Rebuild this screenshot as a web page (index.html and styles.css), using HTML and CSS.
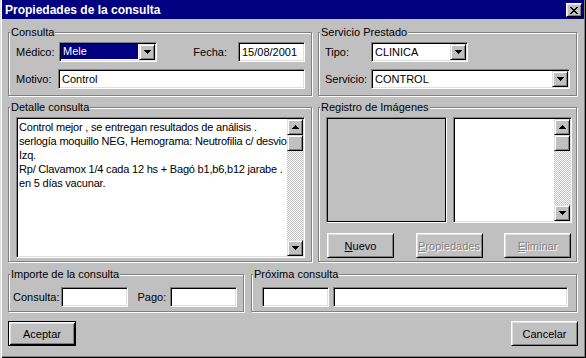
FILE: index.html
```html
<!DOCTYPE html>
<html lang="es">
  <head>
    <meta charset="UTF-8" />
    <title>Propiedades de la consulta</title>
    <link rel="stylesheet" href="styles.css">
  </head>
  <body>
    <div class="window">
      <div class="titlebar">
        <span class="title">Propiedades de la consulta</span>
        <span class="close-btn">
          <svg width="8" height="7" viewBox="0 0 8 7" shape-rendering="crispEdges">
            <path d="M0 0h2v1H0zM6 0h2v1H6zM1 1h2v1H1zM5 1h2v1H5zM2 2h4v1H2zM3 3h2v1H3zM2 4h4v1H2zM1 5h2v1H1zM5 5h2v1H5zM0 6h2v1H0zM6 6h2v1H6z" fill="#000"/>
          </svg>
        </span>
      </div>

      <div class="content">
        <div class="row row-top">
          <fieldset class="group group-consulta">
            <legend>Consulta</legend>
            <div class="group-body">
              <div class="line">
                <span class="lbl lbl-medico">Médico:</span>
                <div class="combo sunken combo-medico">
                  <span class="combo-value selected">Mele</span>
                  <span class="drop-btn raised">
                    <svg width="7" height="4" viewBox="0 0 7 4" shape-rendering="crispEdges"><path d="M0 0h7v1H0zM1 1h5v1H1zM2 2h3v1H2zM3 3h1v1H3z" fill="#000"/></svg>
                  </span>
                </div>
                <span class="lbl lbl-fecha">Fecha:</span>
                <div class="field sunken field-fecha"><span>15/08/2001</span></div>
              </div>
              <div class="line">
                <span class="lbl lbl-motivo">Motivo:</span>
                <div class="field sunken field-grow"><span>Control</span></div>
              </div>
            </div>
          </fieldset>

          <fieldset class="group group-servicio">
            <legend>Servicio Prestado</legend>
            <div class="group-body">
              <div class="line">
                <span class="lbl lbl-servicio">Tipo:</span>
                <div class="combo sunken combo-tipo">
                  <span class="combo-value">CLINICA</span>
                  <span class="drop-btn raised">
                    <svg width="7" height="4" viewBox="0 0 7 4" shape-rendering="crispEdges"><path d="M0 0h7v1H0zM1 1h5v1H1zM2 2h3v1H2zM3 3h1v1H3z" fill="#000"/></svg>
                  </span>
                </div>
              </div>
              <div class="line">
                <span class="lbl lbl-servicio">Servicio:</span>
                <div class="combo sunken field-grow">
                  <span class="combo-value">CONTROL</span>
                  <span class="drop-btn raised">
                    <svg width="7" height="4" viewBox="0 0 7 4" shape-rendering="crispEdges"><path d="M0 0h7v1H0zM1 1h5v1H1zM2 2h3v1H2zM3 3h1v1H3z" fill="#000"/></svg>
                  </span>
                </div>
              </div>
            </div>
          </fieldset>
        </div>

        <div class="row row-mid">
          <fieldset class="group group-detalle">
            <legend>Detalle consulta</legend>
            <div class="group-body">
              <div class="memo sunken">
                <div class="memo-text">Control mejor , se entregan resultados de análisis .<br>serlogía moquillo NEG, Hemograma: Neutrofilia c/ desvio<br>Izq.<br>Rp/ Clavamox 1/4 cada 12 hs + Bagó b1,b6,b12 jarabe .<br>en 5 días vacunar.</div>
                <div class="scrollbar">
                  <span class="scroll-btn raised">
                    <svg width="7" height="4" viewBox="0 0 7 4" shape-rendering="crispEdges"><path d="M3 0h1v1H3zM2 1h3v1H2zM1 2h5v1H1zM0 3h7v1H0z" fill="#000"/></svg>
                  </span>
                  <span class="scroll-thumb raised"></span>
                  <span class="scroll-track"></span>
                  <span class="scroll-btn raised">
                    <svg width="7" height="4" viewBox="0 0 7 4" shape-rendering="crispEdges"><path d="M0 0h7v1H0zM1 1h5v1H1zM2 2h3v1H2zM3 3h1v1H3z" fill="#000"/></svg>
                  </span>
                </div>
              </div>
            </div>
          </fieldset>

          <fieldset class="group group-registro">
            <legend>Registro de Imágenes</legend>
            <div class="group-body registro-body">
              <div class="image-box"></div>
              <div class="list-box sunken">
                <div class="list-items"></div>
                <div class="scrollbar">
                  <span class="scroll-btn raised">
                    <svg width="7" height="4" viewBox="0 0 7 4" shape-rendering="crispEdges"><path d="M3 0h1v1H3zM2 1h3v1H2zM1 2h5v1H1zM0 3h7v1H0z" fill="#000"/></svg>
                  </span>
                  <span class="scroll-thumb raised"></span>
                  <span class="scroll-track"></span>
                  <span class="scroll-btn raised">
                    <svg width="7" height="4" viewBox="0 0 7 4" shape-rendering="crispEdges"><path d="M0 0h7v1H0zM1 1h5v1H1zM2 2h3v1H2zM3 3h1v1H3z" fill="#000"/></svg>
                  </span>
                </div>
              </div>
              <div class="image-actions">
                <span class="btn"><u>N</u>uevo</span>
                <span class="btn disabled"><u>P</u>ropiedades</span>
                <span class="btn disabled"><u>E</u>liminar</span>
              </div>
            </div>
          </fieldset>
        </div>

        <div class="row row-bottom">
          <fieldset class="group group-importe">
            <legend>Importe de la consulta</legend>
            <div class="group-body line">
              <span class="lbl lbl-consulta">Consulta:</span>
              <div class="field sunken field-importe"></div>
              <span class="lbl lbl-pago">Pago:</span>
              <div class="field sunken field-importe"></div>
            </div>
          </fieldset>

          <fieldset class="group group-proxima">
            <legend>Próxima consulta</legend>
            <div class="group-body line">
              <div class="field sunken field-fecha-prox"></div>
              <div class="field sunken field-grow"></div>
            </div>
          </fieldset>
        </div>

        <div class="actions">
          <span class="btn btn-default">Aceptar</span>
          <span class="btn btn-cancel">Cancelar</span>
        </div>
      </div>
    </div>
  </body>
</html>
```

FILE: styles.css
```css
* {
  box-sizing: border-box;
}

body {
  margin: 0;
  font-family: "Liberation Sans", Arial, sans-serif;
  font-size: 11px;
  color: #000;
  background-color: #c0c0c0;
}

.window {
  width: 586px;
  height: 358px;
  padding: 0 2px 2px 2px;
  background-color: #c0c0c0;
  box-shadow: inset 1px 0 0 #dfdfdf, inset 2px 0 0 #fff, inset -1px -1px 0 #000,
    inset -2px -2px 0 #808080;
}

/* Title bar */
.titlebar {
  display: flex;
  align-items: flex-start;
  height: 19px;
  padding: 3px 2px 0 3px;
  background-color: #000080;
  color: #fff;
}

.title {
  font-size: 12px;
  font-weight: bold;
  line-height: 14px;
}

.close-btn {
  display: flex;
  align-items: center;
  justify-content: center;
  width: 16px;
  height: 14px;
  margin-left: auto;
  background-color: #c0c0c0;
  border: 1px solid;
  border-color: #fff #000 #000 #fff;
  box-shadow: inset 1px 1px 0 #dfdfdf, inset -1px -1px 0 #808080;
}

/* Layout */
.content {
  padding: 7px 7px 0 6px;
}

.row {
  display: flex;
  gap: 6px;
}

.row-mid {
  margin-top: 5px;
}

.row-bottom {
  margin-top: 6px;
  gap: 7px;
}

/* Group boxes */
.group {
  margin: 0;
  padding: 0;
  min-width: 0;
  border: 1px solid #808080;
  box-shadow: inset 1px 1px 0 #fff, 1px 1px 0 #fff;
}

.group legend {
  margin-left: 1px;
  padding: 0 1px;
  line-height: 13px;
  background-color: #c0c0c0;
}

.group-body {
  padding: 3px 6px 3px 7px;
}

.group-consulta,
.group-detalle {
  width: 304px;
}

.group-servicio,
.group-registro {
  flex: 1;
}

.group-consulta .group-body {
  display: grid;
  row-gap: 7px;
  padding-bottom: 6px;
}

.group-servicio .group-body {
  display: grid;
  row-gap: 7px;
  padding: 3px 6px 6px 6px;
}

.group-importe {
  width: 236px;
}

.group-proxima {
  flex: 1;
}

.line {
  display: flex;
  align-items: center;
}

.lbl {
  white-space: nowrap;
}

.lbl-medico {
  width: 43px;
}

.lbl-motivo {
  width: 42px;
}

.lbl-fecha {
  margin-left: auto;
  margin-right: 11px;
}

.lbl-servicio {
  width: 46px;
}

/* Sunken fields */
.sunken {
  padding: 1px;
  background-color: #fff;
  border: 1px solid;
  border-color: #808080 #fff #fff #808080;
  box-shadow: inset 1px 1px 0 #000, inset -1px -1px 0 #dfdfdf;
}

.raised {
  background-color: #c0c0c0;
  border: 1px solid;
  border-color: #dfdfdf #000 #000 #dfdfdf;
  box-shadow: inset 1px 1px 0 #fff, inset -1px -1px 0 #808080;
}

.field {
  height: 20px;
  line-height: 16px;
}

.field span {
  padding-left: 2px;
}

.field-grow {
  flex: 1;
}

.field-fecha {
  width: 67px;
}

.combo {
  display: flex;
  height: 20px;
}

.combo-medico {
  width: 98px;
}

.combo-tipo {
  width: 97px;
}

.combo-value {
  flex: 1;
  padding-left: 2px;
  line-height: 16px;
}

.combo-value.selected {
  margin: 0 1px 1px 0;
  line-height: 15px;
  background-color: #000080;
  color: #fff;
}

.drop-btn,
.scroll-btn {
  display: flex;
  align-items: center;
  justify-content: center;
  width: 16px;
  height: 16px;
}

/* Memo */
.memo {
  display: flex;
  height: 141px;
}

.memo-text {
  flex: 1;
  padding: 1px 0 0 1px;
  line-height: 14px;
  letter-spacing: -0.2px;
  white-space: nowrap;
  overflow: hidden;
}

.scrollbar {
  display: flex;
  flex-direction: column;
  width: 16px;
}

.scroll-thumb {
  height: 16px;
}

.scroll-track {
  flex: 1;
  background: repeating-conic-gradient(#fff 0 25%, #c0c0c0 0 50%) 0 0 / 2px 2px;
}

/* Image register */
.registro-body {
  display: grid;
  grid-template-columns: 121px 119px;
  grid-template-rows: 106px 25px;
  column-gap: 6px;
  row-gap: 10px;
  padding: 3px 4px 3px 7px;
}

.image-box {
  border: 1px solid;
  border-color: #808080 #fff #fff #808080;
  box-shadow: inset 1px 1px 0 #000, inset -1px -1px 0 #000;
}

.list-box {
  display: flex;
}

.list-items {
  flex: 1;
}

.image-actions {
  grid-column: 1 / 3;
  display: flex;
  justify-content: space-between;
  padding: 0 1px;
}

/* Buttons */
.btn {
  display: flex;
  align-items: center;
  justify-content: center;
  width: 67px;
  height: 25px;
  background-color: #c0c0c0;
  border: 1px solid;
  border-color: #fff #000 #000 #fff;
  box-shadow: inset 1px 1px 0 #dfdfdf, inset -1px -1px 0 #808080;
}

.btn.disabled {
  color: #808080;
  text-shadow: 1px 1px 0 #fff;
}

.btn-default {
  width: 68px;
  border-color: #000;
  box-shadow: inset 1px 1px 0 #fff, inset -1px -1px 0 #000, inset 2px 2px 0 #dfdfdf,
    inset -2px -2px 0 #808080;
}

.btn-cancel {
  margin-right: -1px;
}

/* Bottom groups */
.group-importe .group-body {
  padding: 6px 4px 4px 4px;
}

.lbl-consulta {
  margin-right: 2px;
}

.lbl-pago {
  margin: 0 4px 0 9px;
}

.field-importe {
  width: 67px;
}

.group-proxima .group-body {
  gap: 4px;
  padding: 6px 8px 4px 10px;
}

.field-fecha-prox {
  width: 67px;
}

.actions {
  display: flex;
  justify-content: space-between;
  margin-top: 9px;
}
```
